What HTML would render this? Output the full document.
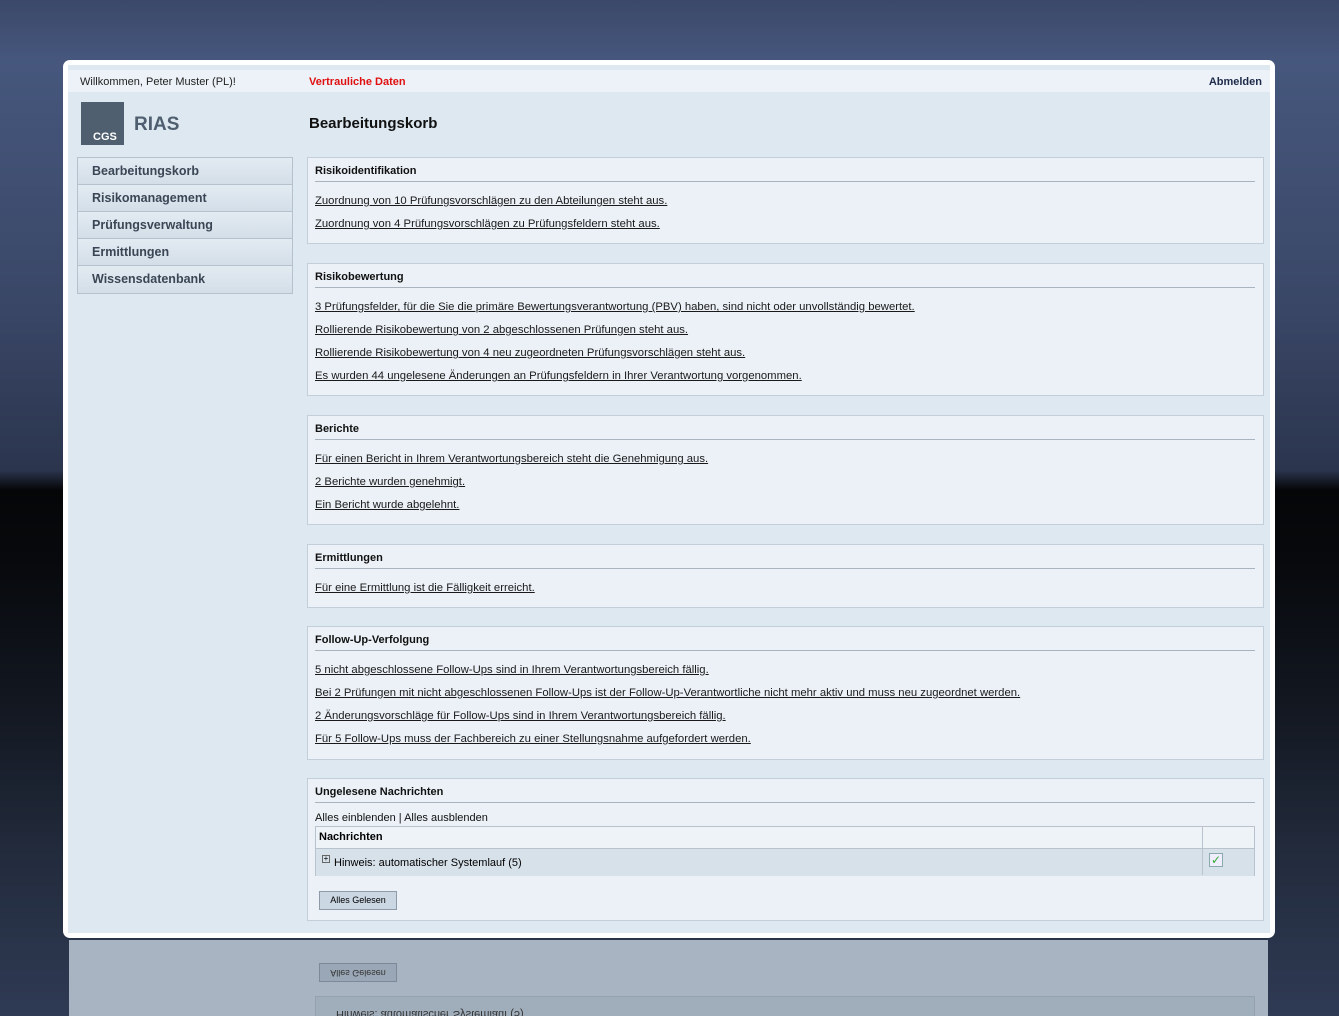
<!DOCTYPE html>
<html><head><meta charset="utf-8"><style>
*{margin:0;padding:0;box-sizing:border-box}
html{width:1339px;height:1016px;overflow:hidden}
body{width:1339px;height:1016px;overflow:hidden;position:relative;font-family:"Liberation Sans",Arial,sans-serif;
background:linear-gradient(180deg,#3b4868 0px,#46577d 60px,#3a4767 300px,#2b354e 470px,#050608 490px,#07090c 560px,#141923 720px,#222b3c 850px,#2f3a54 1016px);}
.card{position:absolute;left:63px;top:60px;width:1212px;height:878px;background:#fff;border-radius:7px;padding:5px}
.inner{position:absolute;left:5px;top:5px;right:5px;bottom:5px;background:#dde8f0;overflow:hidden}
.top{position:absolute;left:0;top:5px;width:100%;height:22px;background:#ecf2f7;font-size:11px;color:#222}
.refl{position:absolute;left:69px;top:940px;width:1199px;height:76px;background:#a8b4c2;overflow:hidden}
a,.l{color:#1a1a1a;text-decoration:underline}
.sec{position:absolute;left:239px;width:957px;background:#ebf1f7;border:1px solid #c2ceda}
.sec h3{font-size:11px;font-weight:bold;margin:7px 8px 0 7px;padding-bottom:4px;border-bottom:1px solid #a9b4bf;color:#111}
.sec .l{display:block;font-size:11.3px;margin-left:7px;height:23px;line-height:23px;letter-spacing:0}
.nav{position:absolute;left:9px;top:92px;width:216px;border:1px solid #b5c1cc}
.nav div{height:27px;line-height:26px;padding-left:14px;font-size:12.5px;font-weight:bold;color:#3a4655;background:linear-gradient(#e3ebf2,#d3dee8);border-bottom:1px solid #b5c1cc}
.nav div:last-child{border-bottom:none}
</style></head><body>
<div class="card"><div class="inner">
<div class="top"><span style="position:absolute;left:12px;top:6px">Willkommen, Peter Muster (PL)!</span>
<span style="position:absolute;left:241px;top:6px;color:#e01010;font-weight:bold">Vertrauliche Daten</span>
<span style="position:absolute;right:8px;top:6px;color:#1e2a4a;font-weight:bold">Abmelden</span></div>
<div style="position:absolute;left:13px;top:37px;width:43px;height:43px;background:#4f5f70"><span style="position:absolute;left:12px;bottom:2px;color:#fff;font-size:11px;font-weight:bold">CGS</span></div>
<div style="position:absolute;left:66px;top:49px;font-size:19px;font-weight:bold;color:#4f5f70">RIAS</div>
<div style="position:absolute;left:241px;top:50px;font-size:15px;font-weight:bold;color:#111">Bearbeitungskorb</div>
<div class="nav"><div>Bearbeitungskorb</div><div>Risikomanagement</div><div>Prüfungsverwaltung</div><div>Ermittlungen</div><div>Wissensdatenbank</div></div>

<div class="sec" style="top:92px;height:87px"><h3>Risikoidentifikation</h3><div style="height:8px"></div>
<span class="l">Zuordnung von 10 Prüfungsvorschlägen zu den Abteilungen steht aus.</span>
<span class="l">Zuordnung von 4 Prüfungsvorschlägen zu Prüfungsfeldern steht aus.</span></div>

<div class="sec" style="top:198px;height:133px"><h3>Risikobewertung</h3><div style="height:8px"></div>
<span class="l">3 Prüfungsfelder, für die Sie die primäre Bewertungsverantwortung (PBV) haben, sind nicht oder unvollständig bewertet.</span>
<span class="l">Rollierende Risikobewertung von 2 abgeschlossenen Prüfungen steht aus.</span>
<span class="l">Rollierende Risikobewertung von 4 neu zugeordneten Prüfungsvorschlägen steht aus.</span>
<span class="l">Es wurden 44 ungelesene Änderungen an Prüfungsfeldern in Ihrer Verantwortung vorgenommen.</span></div>

<div class="sec" style="top:350px;height:110px"><h3>Berichte</h3><div style="height:8px"></div>
<span class="l">Für einen Bericht in Ihrem Verantwortungsbereich steht die Genehmigung aus.</span>
<span class="l">2 Berichte wurden genehmigt.</span>
<span class="l">Ein Bericht wurde abgelehnt.</span></div>

<div class="sec" style="top:479px;height:64px"><h3>Ermittlungen</h3><div style="height:8px"></div>
<span class="l">Für eine Ermittlung ist die Fälligkeit erreicht.</span></div>

<div class="sec" style="top:561px;height:134px"><h3>Follow-Up-Verfolgung</h3><div style="height:8px"></div>
<span class="l">5 nicht abgeschlossene Follow-Ups sind in Ihrem Verantwortungsbereich fällig.</span>
<span class="l">Bei 2 Prüfungen mit nicht abgeschlossenen Follow-Ups ist der Follow-Up-Verantwortliche nicht mehr aktiv und muss neu zugeordnet werden.</span>
<span class="l">2 Änderungsvorschläge für Follow-Ups sind in Ihrem Verantwortungsbereich fällig.</span>
<span class="l">Für 5 Follow-Ups muss der Fachbereich zu einer Stellungsnahme aufgefordert werden.</span></div>

<div class="sec" style="top:713px;height:143px"><h3>Ungelesene Nachrichten</h3>
<div style="font-size:11px;margin:9px 7px 0;color:#111">Alles einblenden | Alles ausblenden</div>
<div style="position:absolute;left:7px;top:47px;width:940px;height:50px;border:1px solid #b8c3ce;background:#eef3f8">
<div style="height:22px;border-bottom:1px solid #b8c3ce;font-size:11px;font-weight:bold;line-height:21px;padding-left:3px">Nachrichten</div>
<div style="height:27px;background:#d7e1ea;font-size:11px;line-height:29px;padding-left:6px"><span style="display:inline-block;width:8px;height:8px;border:1px solid #666;font-size:8px;line-height:6px;text-align:center;vertical-align:5px;margin-right:4px">+</span>Hinweis: automatischer Systemlauf (5)</div>
<div style="position:absolute;left:886px;top:0;width:1px;height:48px;background:#b8c3ce"></div>
<div style="position:absolute;left:893px;top:26px;width:14px;height:14px;border:1px solid #8aa;background:#eef;color:#3a3;font-size:12px;line-height:12px;text-align:center">✓</div>
</div>
<div style="position:absolute;left:11px;top:112px;width:78px;height:19px;border:1px solid #8e9aa8;background:#cbd7e3;font-size:9px;line-height:17px;text-align:center">Alles Gelesen</div>
</div>
</div></div>
<div class="refl">
<div style="position:absolute;left:250px;top:23px;width:78px;height:19px;border:1px solid #7d8898;background:#9aa7b6;font-size:9px;line-height:17px;text-align:center;transform:scaleY(-1);color:#333">Alles Gelesen</div>
<div style="position:absolute;left:246px;top:56px;width:940px;height:30px;border:1px solid #95a1af;background:#a0adbb;font-size:11px;padding-left:20px;line-height:22px;color:#333;transform:scaleY(-1)">Hinweis: automatischer Systemlauf (5)</div>
</div>
</body></html>
